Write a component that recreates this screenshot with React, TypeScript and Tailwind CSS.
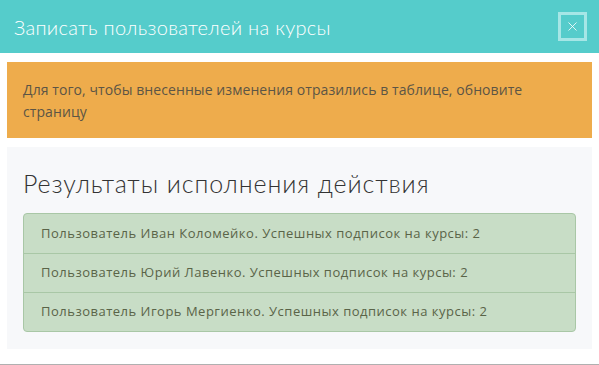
import { X } from "lucide-react";

const results = [
  "Пользователь Иван Коломейко. Успешных подписок на курсы: 2",
  "Пользователь Юрий Лавенко. Успешных подписок на курсы: 2",
  "Пользователь Игорь Мергиенко. Успешных подписок на курсы: 2",
];

export default function App() {
  return (
    <div className="w-[599px] h-[365px] bg-white overflow-hidden relative font-['Open_Sans',sans-serif]">
      {/* header */}
      <div className="h-[53px] bg-[#55cccb] flex items-center justify-between pl-[14px] pr-[12px]">
        <h2 className="text-white text-[20px] font-light font-['Lato',sans-serif] tracking-[0.3px]">Записать пользователей на курсы</h2>
        <button className="w-[29px] h-[29px] border-[3px] border-[#a6e6e6] flex items-center justify-center text-white">
          <X size={15} strokeWidth={1.3} />
        </button>
      </div>

      <div className="px-[7px] pt-[9px]">
        {/* warning */}
        <div className="bg-[#eeac4c] h-[76px] px-[16px] pt-[17px] text-[14px] leading-[22px] tracking-[0.08px] text-[#5c5545]">
          Для того, чтобы внесенные изменения отразились в таблице, обновите страницу
        </div>

        {/* results */}
        <div className="mt-[9px] bg-[#f7f8fa] h-[202px] px-[16px] pt-[20px]">
          <h3 className="text-[#333] text-[25px] font-light font-['Lato',sans-serif] leading-[32px] tracking-[0.9px]">Результаты исполнения действия</h3>
          <ul className="mt-[14px] border border-[#a9c7a6] rounded-[4px] bg-[#c8ddc6]">
            {results.map((r, i) => (
              <li
                key={i}
                className={
                  "h-[39px] flex items-center px-[17px] text-[13px] tracking-[0.5px] text-[#5a6448] " +
                  (i > 0 ? "border-t border-[#a9c7a6]" : "")
                }
              >
                {r}
              </li>
            ))}
          </ul>
        </div>
      </div>

      <div className="absolute left-0 right-0 bottom-0 h-[1px] bg-[#b0b0b0]" />
    </div>
  );
}
